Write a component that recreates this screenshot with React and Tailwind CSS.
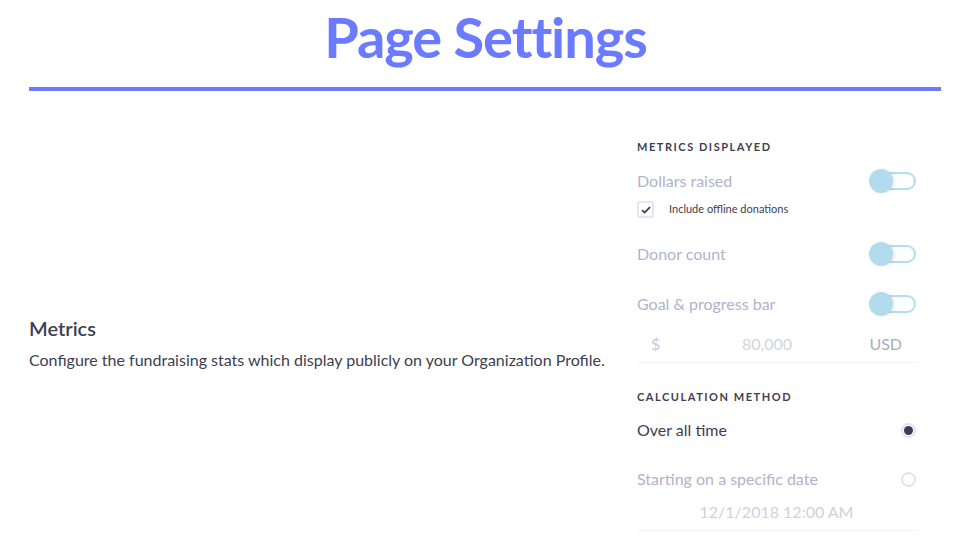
import React from "react";

function Toggle() {
  return (
    <div className="relative h-[24px] w-[47px] flex items-center">
      <div className="h-[18px] w-[46px] rounded-full border-2 border-[#b5dcef] bg-white ml-[1px]" />
      <div className="absolute left-0 top-0 h-[24px] w-[24px] rounded-full bg-[#b3dbee] shadow-[2px_0_3px_rgba(0,0,0,0.08)]" />
    </div>
  );
}

function Radio({ checked }) {
  return (
    <div className="h-[15px] w-[15px] rounded-full border-2 border-[#dde3fb] bg-white flex items-center justify-center">
      {checked && <div className="h-[9px] w-[9px] rounded-full bg-[#3b3e52]" />}
    </div>
  );
}

export default function App() {
  return (
    <div className="w-[963px] h-[558px] bg-white overflow-hidden font-['Lato',sans-serif] px-[29px]">
      <h1 className="text-center text-[56px] leading-[56px] font-bold text-[#6a7bff] pt-[9px] pl-[8px] tracking-[-1.1px]">
        Page Settings
      </h1>
      <div className="mt-[22px] h-[4px] w-[912px] bg-[#6a7bff]" />
      <div className="flex items-center">
        <div className="flex-1 pt-[66px]">
          <div className="text-[20px] leading-[24px] font-semibold text-[#3d4052]">Metrics</div>
          <div className="mt-[8px] text-[16px] leading-[24px] text-[#3d4052]">
            Configure the fundraising stats which display publicly on your Organization Profile.
          </div>
        </div>
        <div className="w-[279px] mr-[18px] pt-[49px]">
          <div className="text-[11px] leading-[14px] font-bold tracking-[0.14em] text-[#3d4052]">
            METRICS DISPLAYED
          </div>
          <div className="mt-[15px] flex items-center justify-between h-[24px]">
            <span className="text-[16px] text-[#b0b3cb]">Dollars raised</span>
            <Toggle />
          </div>
          <div className="mt-[8px] flex items-center h-[17px]">
            <div className="h-[17px] w-[17px] rounded-[3px] border-2 border-[#e2e6f8] flex items-center justify-center">
              <svg width="10" height="8" viewBox="0 0 10 8" fill="none">
                <path d="M1 4.2L3.6 6.6L9 1.2" stroke="#3b3e52" strokeWidth="1.8" />
              </svg>
            </div>
            <span className="ml-[15px] text-[11px] text-[#3d4052]">Include offline donations</span>
          </div>
          <div className="mt-[24px] flex items-center justify-between h-[24px]">
            <span className="text-[16px] text-[#b0b3cb]">Donor count</span>
            <Toggle />
          </div>
          <div className="mt-[26px] flex items-center justify-between h-[24px]">
            <span className="text-[16px] text-[#b0b3cb]">Goal &amp; progress bar</span>
            <Toggle />
          </div>
          <div className="mt-[9px] h-[38px] flex items-center border-b border-[#f1f2f9] text-[16px]">
            <span className="w-[35px] pl-[14px] text-[#c9cbd9]">$</span>
            <span className="flex-1 text-center text-[#d2d4de] pl-[6px]">80,000</span>
            <span className="w-[60px] text-right pr-[14px] text-[#a9acc3]">USD</span>
          </div>
          <div className="mt-[27px] text-[11px] leading-[14px] font-bold tracking-[0.14em] text-[#3d4052]">
            CALCULATION METHOD
          </div>
          <div className="mt-[14px] flex items-center justify-between h-[24px]">
            <span className="text-[16px] text-[#3b3e52]">Over all time</span>
            <Radio checked />
          </div>
          <div className="mt-[25px] flex items-center justify-between h-[24px]">
            <span className="text-[16px] text-[#b0b3cb]">Starting on a specific date</span>
            <Radio />
          </div>
          <div className="mt-[2px] h-[38px] flex items-center justify-center border-b border-[#f1f2f9] text-[16px] text-[#cfd1dc]">
            12/1/2018 12:00 AM
          </div>
        </div>
      </div>
    </div>
  );
}
